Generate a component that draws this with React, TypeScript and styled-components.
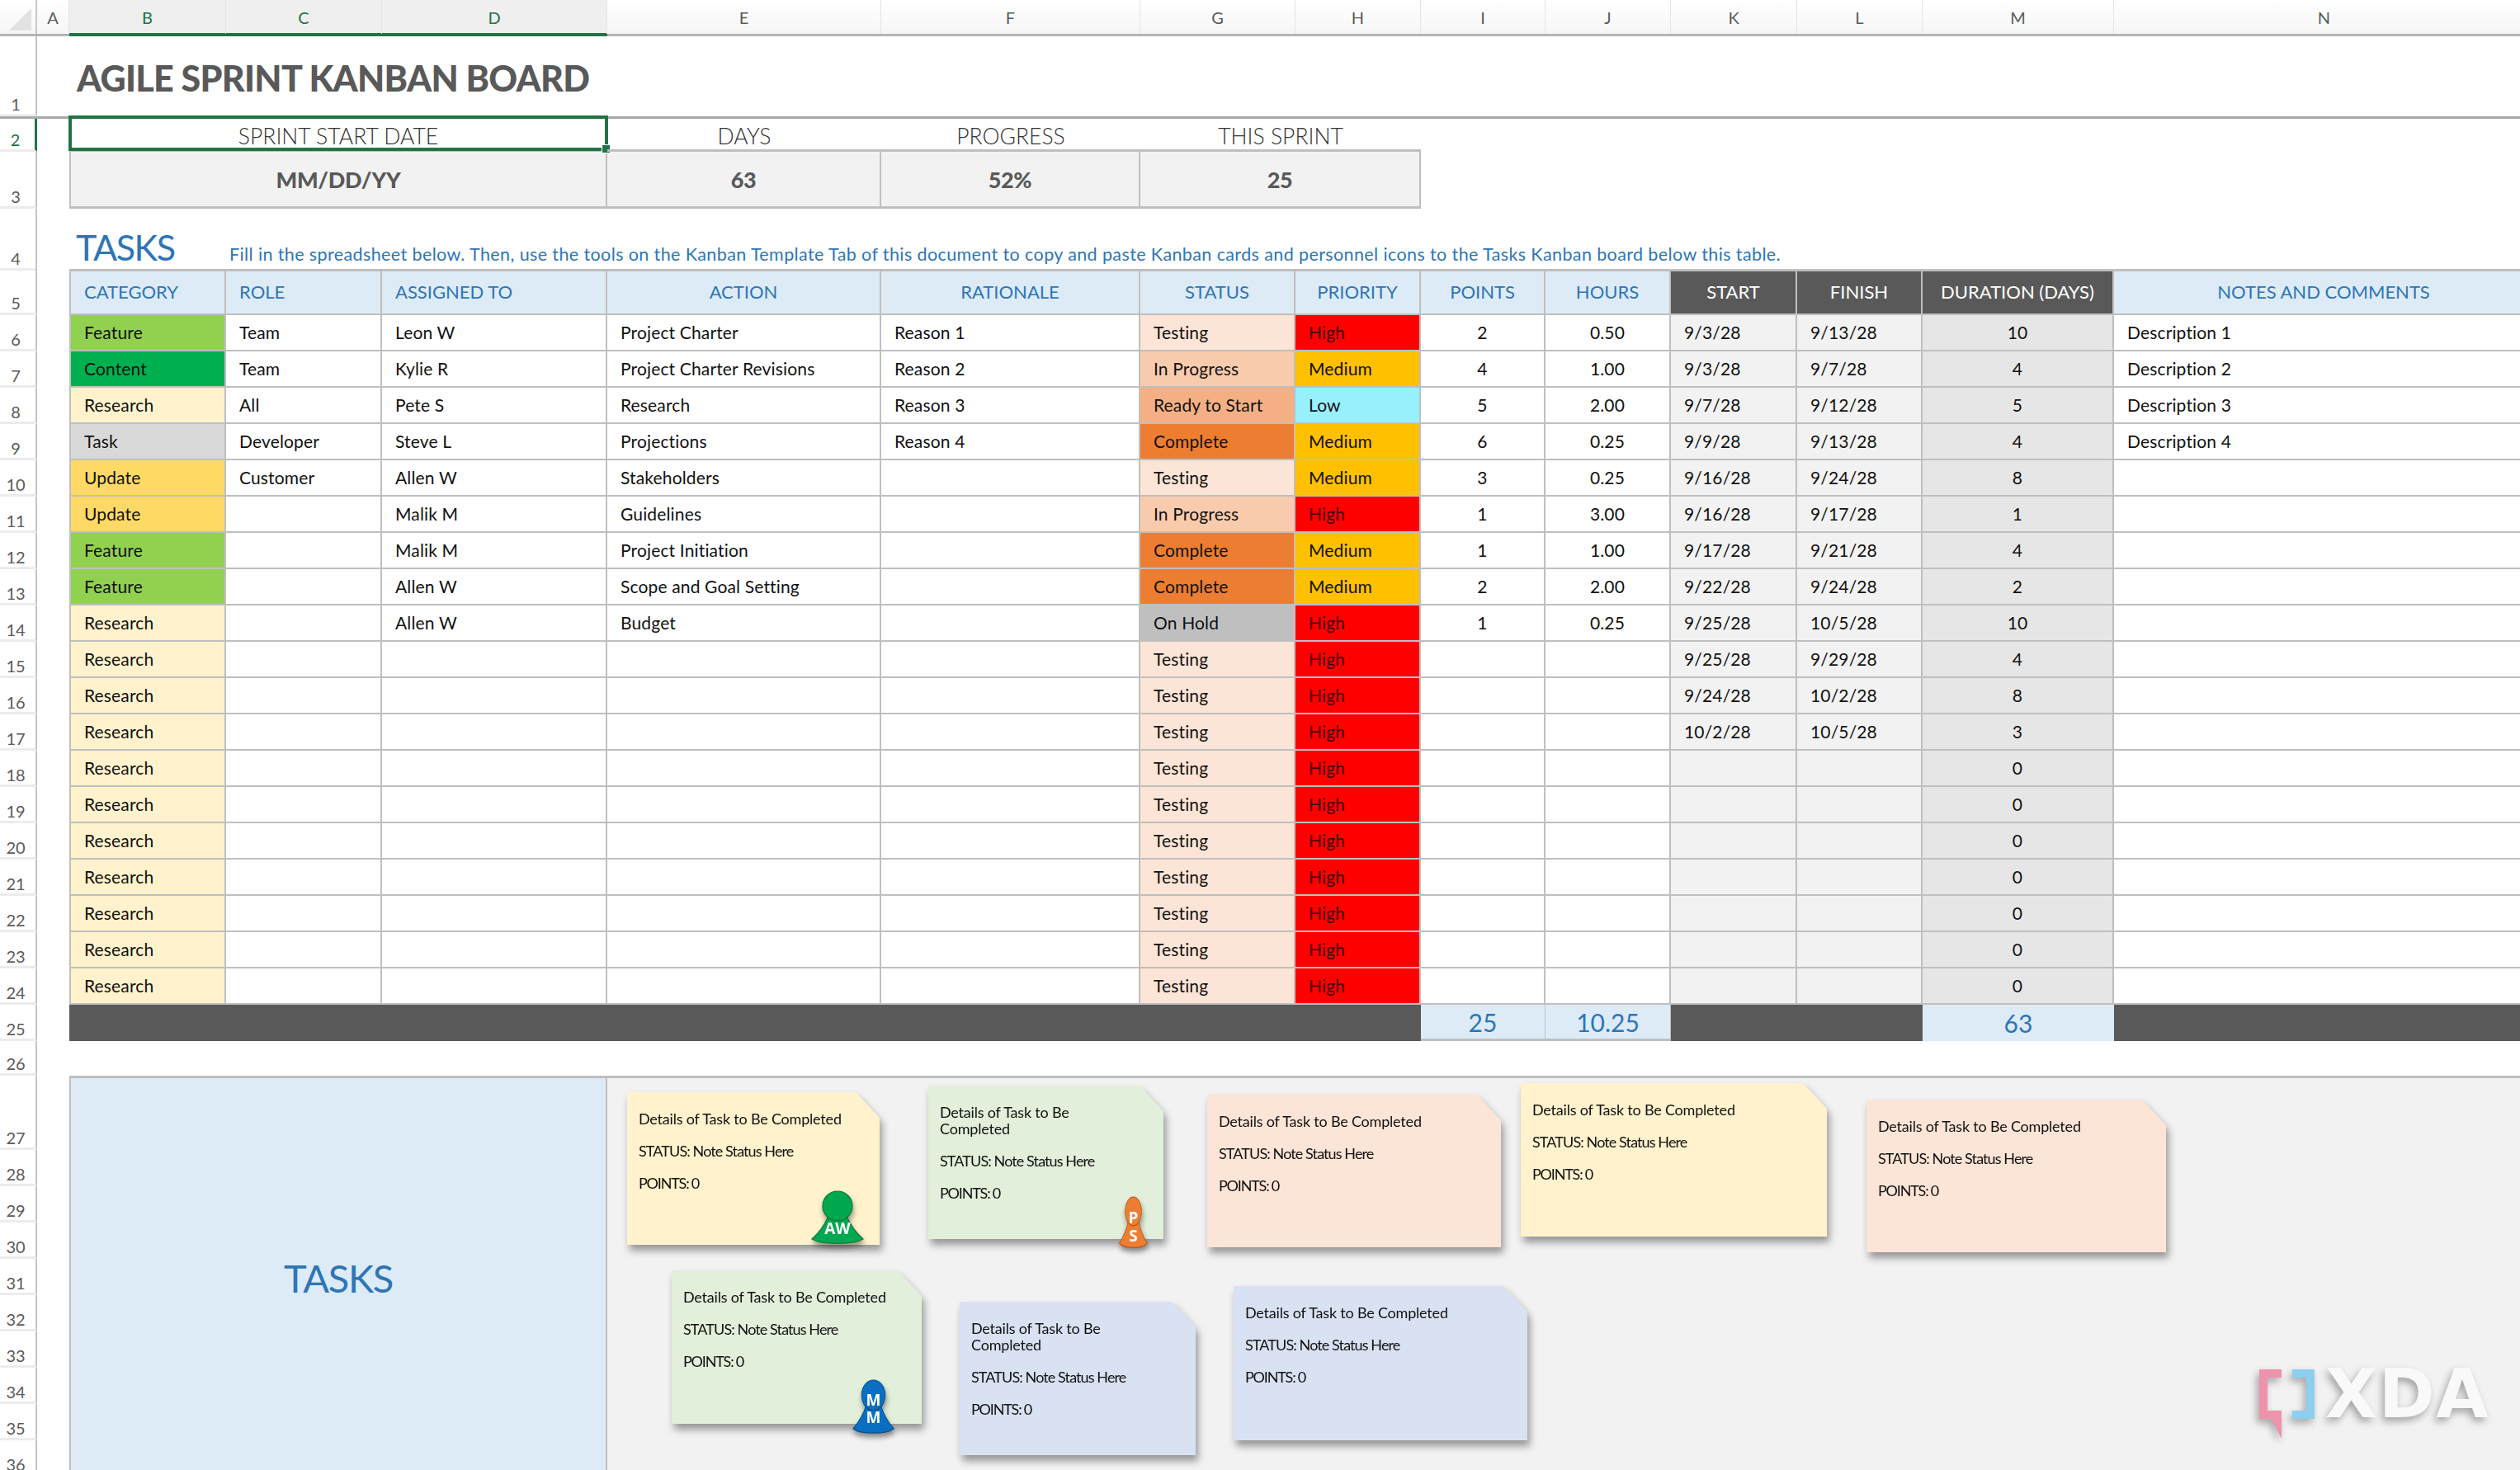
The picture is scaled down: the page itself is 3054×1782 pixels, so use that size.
import React from 'react'
import styled, { createGlobalStyle } from 'styled-components'

const COLS = '45px 39px 190px 189px 273px 332px 314px 188px 152px 151px 152px 153px 152px 232px 510px'
const LINE = '#bfbfbf'
const BLUE = '#2e75b6'
const DARK = '#595959'
const PALE_BLUE = '#ddebf7'
const GREY = '#f2f2f2'

const GlobalStyle = createGlobalStyle`
  html, body {
    margin: 0;
    padding: 0;
    background: #fff;
  }
  body {
    font-family: "Lato", "Liberation Sans", sans-serif;
    color: #111;
  }
  * {
    box-sizing: border-box;
  }
`

const Page = styled.div`
  width: 3054px;
  height: 1782px;
  overflow: hidden;
  display: flex;
  flex-direction: column;
`

const ColumnBar = styled.div`
  display: grid;
  grid-template-columns: ${COLS};
  height: 44px;
  flex: none;
  border-bottom: 3px solid #b4b4b4;
  background: linear-gradient(#fff, #f6f6f6);
`

const Corner = styled.div`
  border-right: 2px solid #c8c8c8;
  position: relative;
  &::after {
    content: '';
    position: absolute;
    right: 5px;
    bottom: 4px;
    border-style: solid;
    border-width: 0 0 27px 27px;
    border-color: transparent transparent #e2e2e2 transparent;
  }
`

const ColumnName = styled.div<{ $active?: boolean }>`
  display: flex;
  align-items: center;
  justify-content: center;
  font-size: 20px;
  color: ${p => (p.$active ? '#217346' : '#5a5a5a')};
  background: ${p => (p.$active ? '#efefef' : 'transparent')};
  border-right: 1px solid #e4e4e4;
  box-shadow: ${p => (p.$active ? '0 3px 0 #217346, inset 0 -1px 0 #217346' : 'none')};
`

const Row = styled.div<{ $h: number; $rule?: boolean }>`
  display: grid;
  grid-template-columns: ${COLS};
  height: ${p => p.$h}px;
  flex: none;
  border-bottom: ${p => (p.$rule ? '3px solid #a8a8a8' : 'none')};
`

const RowNum = styled.div<{ $h?: number; $active?: boolean }>`
  display: flex;
  align-items: flex-end;
  justify-content: center;
  height: ${p => (p.$h ? `${p.$h}px` : 'auto')};
  flex: none;
  padding: 0 5px 0 0;
  font-size: 20px;
  line-height: 24px;
  color: ${p => (p.$active ? '#217346' : '#5a5a5a')};
  border-right: ${p => (p.$active ? '3px solid #217346' : '2px solid #c4c4c4')};
  border-bottom: 3px solid #ececec;
`

const Blank = styled.div``

const Title = styled.h1`
  grid-column: 3 / 10;
  margin: 0;
  align-self: center;
  padding: 4px 0 0 9px;
  font-size: 43px;
  font-weight: 900;
  letter-spacing: -0.7px;
  color: ${DARK};
  line-height: 1;
`

const KpiLabel = styled.div<{ $span?: string; $selected?: boolean }>`
  grid-column: ${p => p.$span || 'auto'};
  display: flex;
  align-items: center;
  justify-content: center;
  padding-top: 4px;
  font-size: 26.5px;
  font-weight: 300;
  color: #333;
  border-bottom: 3px solid ${LINE};
  position: relative;
  ${p =>
    p.$selected &&
    `
    &::before {
      content: '';
      position: absolute;
      inset: -4px -1px -2px -1px;
      border: 4px solid #217346;
    }
    &::after {
      content: '';
      position: absolute;
      right: -4px;
      bottom: -5px;
      width: 9px;
      height: 9px;
      background: #217346;
      border: 1px solid #fff;
    }
  `}
`

const KpiValue = styled.div<{ $span?: string }>`
  grid-column: ${p => p.$span || 'auto'};
  display: flex;
  align-items: center;
  justify-content: center;
  background: ${GREY};
  font-size: 27px;
  font-weight: 900;
  letter-spacing: -0.3px;
  color: ${DARK};
  border-right: 2px solid ${LINE};
  border-bottom: 3px solid ${LINE};
`

const KpiValueFirst = styled(KpiValue)`
  border-left: 2px solid ${LINE};
`

const SectionHead = styled.div`
  grid-column: 3 / 16;
  display: flex;
  align-items: baseline;
  padding: 19px 0 0 8px;
  color: ${BLUE};
`

const SectionTitle = styled.span`
  font-size: 43px;
  letter-spacing: -1.4px;
  line-height: 56px;
  width: 186px;
  flex: none;
`

const SectionNote = styled.span`
  font-size: 21.5px;
  letter-spacing: 0.39px;
  white-space: nowrap;
`

const Cell = styled.div<{ $bg?: string; $align?: string; $color?: string }>`
  display: flex;
  align-items: center;
  justify-content: ${p => p.$align || 'flex-start'};
  padding: 0 16px 2px;
  font-size: 21px;
  letter-spacing: 0.15px;
  white-space: nowrap;
  background: ${p => p.$bg || 'transparent'};
  color: ${p => p.$color || '#111'};
  border-right: 2px solid ${LINE};
  border-bottom: 2px solid ${LINE};
`

const CategoryCell = styled(Cell)`
  border-left: 2px solid ${LINE};
`

const HeadCell = styled(Cell)`
  font-size: 22px;
  letter-spacing: 0;
  border-top: 3px solid ${LINE};
  color: ${p => p.$color || BLUE};
  background: ${p => p.$bg || PALE_BLUE};
`

const HeadCategory = styled(HeadCell)`
  border-left: 2px solid ${LINE};
`

const DarkBand = styled.div<{ $span: string }>`
  grid-column: ${p => p.$span};
  background: ${DARK};
`

const TotalCell = styled.div<{ $rule?: boolean }>`
  display: flex;
  align-items: center;
  justify-content: center;
  background: ${PALE_BLUE};
  color: ${BLUE};
  font-size: 30px;
  border-right: ${p => (p.$rule ? `1px solid ${LINE}` : 'none')};
  border-bottom: ${p => (p.$rule ? `3px solid ${LINE}` : 'none')};
`

const Board = styled.div`
  display: flex;
  flex: 1;
  min-height: 0;
`

const BoardGutter = styled.div`
  width: 45px;
  flex: none;
  display: flex;
  flex-direction: column;
`

const BoardSpacer = styled.div`
  width: 39px;
  flex: none;
`

const BoardPanel = styled.div`
  width: 652px;
  flex: none;
  display: flex;
  justify-content: center;
  padding-top: 212px;
  font-size: 47px;
  letter-spacing: -1.3px;
  line-height: 60px;
  color: ${BLUE};
  background: ${PALE_BLUE};
  border: solid ${LINE};
  border-width: 3px 2px 0 2px;
`

const Canvas = styled.div`
  flex: 1;
  position: relative;
  background: ${GREY};
  border-top: 3px solid ${LINE};
`

const CardShadow = styled.div<{ $x: number; $y: number; $w: number; $h: number }>`
  position: absolute;
  left: ${p => p.$x}px;
  top: ${p => p.$y - 3}px;
  width: ${p => p.$w}px;
  height: ${p => p.$h}px;
  filter: drop-shadow(3px 7px 5px rgba(0, 0, 0, 0.38));
`

const Card = styled.div<{ $bg: string }>`
  width: 100%;
  height: 100%;
  padding: 22px 0 0 14px;
  background: ${p => p.$bg};
  clip-path: polygon(0 0, calc(100% - 29px) 0, 100% 31px, 100% 100%, 0 100%);
  font-size: 18px;
  line-height: 20px;
  color: #111;
`

const CardLine = styled.p<{ $track?: number }>`
  margin: 0 0 19px;
  letter-spacing: ${p => p.$track ?? 0}px;
`

const PawnBox = styled.div<{ $x: number; $y: number; $w: number; $h: number }>`
  position: absolute;
  left: ${p => p.$x}px;
  top: ${p => p.$y - 3}px;
  width: ${p => p.$w}px;
  height: ${p => p.$h}px;
  filter: drop-shadow(1px 5px 3px rgba(0, 0, 0, 0.4));
`

const PawnArt = styled.svg`
  position: absolute;
  inset: 0;
  width: 100%;
  height: 100%;
`

const PawnLabel = styled.span<{ $top: number }>`
  position: absolute;
  left: 0;
  right: 0;
  top: ${p => p.$top}px;
  text-align: center;
  font-family: "Open Sans", "Liberation Sans", sans-serif;
  font-size: 19px;
  line-height: 22px;
  font-weight: 700;
  color: #fff;
`

const Logo = styled.div`
  position: absolute;
  left: 2002px;
  top: 353px;
  width: 290px;
  height: 90px;
  display: flex;
  align-items: flex-start;
  filter: drop-shadow(-3px 5px 5px rgba(0, 0, 0, 0.32));
`

const LogoMark = styled.svg`
  width: 68px;
  height: 84px;
  flex: none;
`

const LogoText = styled.span`
  margin-left: 12px;
  font-family: "DejaVu Sans", sans-serif;
  font-weight: 700;
  font-size: 82px;
  line-height: 60px;
  letter-spacing: 1.5px;
  color: #f9f9f9;
`

const category: Record<string, string> = {
  Feature: '#92d050',
  Content: '#00b050',
  Research: '#fff2cc',
  Task: '#d9d9d9',
  Update: '#ffd966',
}

const statusBg: Record<string, string> = {
  Testing: '#fce4d6',
  'In Progress': '#f8cbad',
  'Ready to Start': '#f4b084',
  Complete: '#ed7d31',
  'On Hold': '#bfbfbf',
}

const priorityBg: Record<string, string> = {
  High: '#ff0000',
  Medium: '#ffc000',
  Low: '#99f0fd',
}

const headers = [
  { label: 'ROLE' },
  { label: 'ASSIGNED TO' },
  { label: 'ACTION', align: 'center' },
  { label: 'RATIONALE', align: 'center' },
  { label: 'STATUS', align: 'center' },
  { label: 'PRIORITY', align: 'center' },
  { label: 'POINTS', align: 'center' },
  { label: 'HOURS', align: 'center' },
  { label: 'START', align: 'center', dark: true },
  { label: 'FINISH', align: 'center', dark: true },
  { label: 'DURATION (DAYS)', align: 'center', dark: true },
  { label: 'NOTES AND COMMENTS', align: 'center' },
]

type Task = [string, string, string, string, string, string, string, string, string, string, string, string, string]

const tasks: Task[] = [
  ['Feature', 'Team', 'Leon W', 'Project Charter', 'Reason 1', 'Testing', 'High', '2', '0.50', '9/3/28', '9/13/28', '10', 'Description 1'],
  ['Content', 'Team', 'Kylie R', 'Project Charter Revisions', 'Reason 2', 'In Progress', 'Medium', '4', '1.00', '9/3/28', '9/7/28', '4', 'Description 2'],
  ['Research', 'All', 'Pete S', 'Research', 'Reason 3', 'Ready to Start', 'Low', '5', '2.00', '9/7/28', '9/12/28', '5', 'Description 3'],
  ['Task', 'Developer', 'Steve L', 'Projections', 'Reason 4', 'Complete', 'Medium', '6', '0.25', '9/9/28', '9/13/28', '4', 'Description 4'],
  ['Update', 'Customer', 'Allen W', 'Stakeholders', '', 'Testing', 'Medium', '3', '0.25', '9/16/28', '9/24/28', '8', ''],
  ['Update', '', 'Malik M', 'Guidelines', '', 'In Progress', 'High', '1', '3.00', '9/16/28', '9/17/28', '1', ''],
  ['Feature', '', 'Malik M', 'Project Initiation', '', 'Complete', 'Medium', '1', '1.00', '9/17/28', '9/21/28', '4', ''],
  ['Feature', '', 'Allen W', 'Scope and Goal Setting', '', 'Complete', 'Medium', '2', '2.00', '9/22/28', '9/24/28', '2', ''],
  ['Research', '', 'Allen W', 'Budget', '', 'On Hold', 'High', '1', '0.25', '9/25/28', '10/5/28', '10', ''],
  ['Research', '', '', '', '', 'Testing', 'High', '', '', '9/25/28', '9/29/28', '4', ''],
  ['Research', '', '', '', '', 'Testing', 'High', '', '', '9/24/28', '10/2/28', '8', ''],
  ['Research', '', '', '', '', 'Testing', 'High', '', '', '10/2/28', '10/5/28', '3', ''],
  ...Array.from({ length: 7 }, (): Task => ['Research', '', '', '', '', 'Testing', 'High', '', '', '', '', '0', '']),
]

const cards = [
  { x: 24, y: 20, w: 306, h: 185, bg: '#fff2cc' },
  { x: 389, y: 12, w: 285, h: 186, bg: '#e2efda', wrap: true },
  { x: 727, y: 23, w: 356, h: 185, bg: '#fce4d6' },
  { x: 1107, y: 9, w: 371, h: 186, bg: '#fff2cc' },
  { x: 1526, y: 29, w: 363, h: 185, bg: '#fce4d6' },
  { x: 78, y: 236, w: 303, h: 186, bg: '#e2efda' },
  { x: 427, y: 274, w: 286, h: 186, bg: '#d9e2f3', wrap: true },
  { x: 759, y: 255, w: 356, h: 187, bg: '#d9e2f3' },
]

const pawns = [
  { x: 247, y: 139, w: 64, h: 67, fill: '#00a84f', edge: '#067a3c', labels: [{ text: 'AW', top: 35 }] },
  { x: 620, y: 146, w: 35, h: 65, fill: '#ed7d31', edge: '#b3541c', labels: [{ text: 'P', top: 15 }, { text: 'S', top: 37 }] },
  { x: 297, y: 368, w: 51, h: 68, fill: '#0a6fc2', edge: '#07508f', labels: [{ text: 'M', top: 14 }, { text: 'M', top: 35 }] },
]

const boardRows = [27, 28, 29, 30, 31, 32, 33, 34, 35, 36]

const Pawn = ({ x, y, w, h, fill, edge, labels }: (typeof pawns)[number]) => (
  <PawnBox $x={x} $y={y} $w={w} $h={h}>
    <PawnArt viewBox="0 0 64 67" preserveAspectRatio="none">
      <path
        d="M21 31C17 41 10 51 1 59C12 66 52 66 63 59C54 51 47 41 43 31Z"
        fill={fill}
        stroke={edge}
        strokeWidth="1.2"
      />
      <ellipse cx="32" cy="19" rx="18" ry="18" fill={fill} stroke={edge} strokeWidth="1.2" />
    </PawnArt>
    {labels.map(l => (
      <PawnLabel key={l.top} $top={l.top}>
        {l.text}
      </PawnLabel>
    ))}
  </PawnBox>
)

export default function App() {
  return (
    <Page>
      <GlobalStyle />
      <ColumnBar>
        <Corner />
        <ColumnName>A</ColumnName>
        <ColumnName $active>B</ColumnName>
        <ColumnName $active>C</ColumnName>
        <ColumnName $active>D</ColumnName>
        {['E', 'F', 'G', 'H', 'I', 'J', 'K', 'L', 'M', 'N'].map(c => (
          <ColumnName key={c}>{c}</ColumnName>
        ))}
      </ColumnBar>

      <Row $h={100} $rule>
        <RowNum>1</RowNum>
        <Blank />
        <Title>AGILE SPRINT KANBAN BOARD</Title>
      </Row>

      <Row $h={40}>
        <RowNum $active>2</RowNum>
        <Blank />
        <KpiLabel $span="3 / 6" $selected>SPRINT START DATE</KpiLabel>
        <KpiLabel>DAYS</KpiLabel>
        <KpiLabel>PROGRESS</KpiLabel>
        <KpiLabel $span="8 / 10">THIS SPRINT</KpiLabel>
      </Row>

      <Row $h={69}>
        <RowNum>3</RowNum>
        <Blank />
        <KpiValueFirst $span="3 / 6">MM/DD/YY</KpiValueFirst>
        <KpiValue>63</KpiValue>
        <KpiValue>52%</KpiValue>
        <KpiValue $span="8 / 10">25</KpiValue>
      </Row>

      <Row $h={73}>
        <RowNum>4</RowNum>
        <Blank />
        <SectionHead>
          <SectionTitle>TASKS</SectionTitle>
          <SectionNote>
            Fill in the spreadsheet below. Then, use the tools on the Kanban Template Tab of this document to copy and
            paste Kanban cards and personnel icons to the Tasks Kanban board below this table.
          </SectionNote>
        </SectionHead>
      </Row>

      <Row $h={56}>
        <RowNum>5</RowNum>
        <Blank />
        <HeadCategory>CATEGORY</HeadCategory>
        {headers.map(h => (
          <HeadCell
            key={h.label}
            $align={h.align}
            $bg={h.dark ? DARK : undefined}
            $color={h.dark ? '#fff' : undefined}
          >
            {h.label}
          </HeadCell>
        ))}
      </Row>

      {tasks.map((t, i) => (
        <Row $h={44} key={i}>
          <RowNum>{i + 6}</RowNum>
          <Blank />
          <CategoryCell $bg={category[t[0]]}>{t[0]}</CategoryCell>
          <Cell>{t[1]}</Cell>
          <Cell>{t[2]}</Cell>
          <Cell>{t[3]}</Cell>
          <Cell>{t[4]}</Cell>
          <Cell $bg={statusBg[t[5]]}>{t[5]}</Cell>
          <Cell $bg={priorityBg[t[6]]} $color={t[6] === 'High' ? '#3a0000' : undefined}>
            {t[6]}
          </Cell>
          <Cell $align="center">{t[7]}</Cell>
          <Cell $align="center">{t[8]}</Cell>
          <Cell $bg={GREY}>{t[9]}</Cell>
          <Cell $bg={GREY}>{t[10]}</Cell>
          <Cell $bg="#e7e6e6" $align="center">{t[11]}</Cell>
          <Cell>{t[12]}</Cell>
        </Row>
      ))}

      <Row $h={44}>
        <RowNum>25</RowNum>
        <Blank />
        <DarkBand $span="3 / 10" />
        <TotalCell $rule>25</TotalCell>
        <TotalCell $rule>10.25</TotalCell>
        <DarkBand $span="12 / 14" />
        <TotalCell>63</TotalCell>
        <DarkBand $span="15 / 16" />
      </Row>

      <Row $h={42}>
        <RowNum>26</RowNum>
      </Row>

      <Board>
        <BoardGutter>
          {boardRows.map(n => (
            <RowNum key={n} $h={n === 27 ? 90 : 44}>
              {n}
            </RowNum>
          ))}
        </BoardGutter>
        <BoardSpacer />
        <BoardPanel>TASKS</BoardPanel>
        <Canvas>
          {cards.map(c => (
            <CardShadow key={c.x} $x={c.x} $y={c.y} $w={c.w} $h={c.h}>
              <Card $bg={c.bg}>
                <CardLine $track={-0.2}>
                  {c.wrap ? (
                    <>
                      Details of Task to Be
                      <br />
                      Completed
                    </>
                  ) : (
                    'Details of Task to Be Completed'
                  )}
                </CardLine>
                <CardLine $track={-0.9}>STATUS: Note Status Here</CardLine>
                <CardLine $track={-1.2}>POINTS: 0</CardLine>
              </Card>
            </CardShadow>
          ))}
          {pawns.map(p => (
            <Pawn key={p.x} {...p} />
          ))}
          <Logo>
            <LogoMark viewBox="0 0 68 84">
              <path d="M0 0H27V10H10V50H27V84L15 60H0Z" fill="#ef92ab" />
              <path d="M40 0H67V60H40V50H57V10H40Z" fill="#8ccfef" />
            </LogoMark>
            <LogoText>XDA</LogoText>
          </Logo>
        </Canvas>
      </Board>
    </Page>
  )
}
